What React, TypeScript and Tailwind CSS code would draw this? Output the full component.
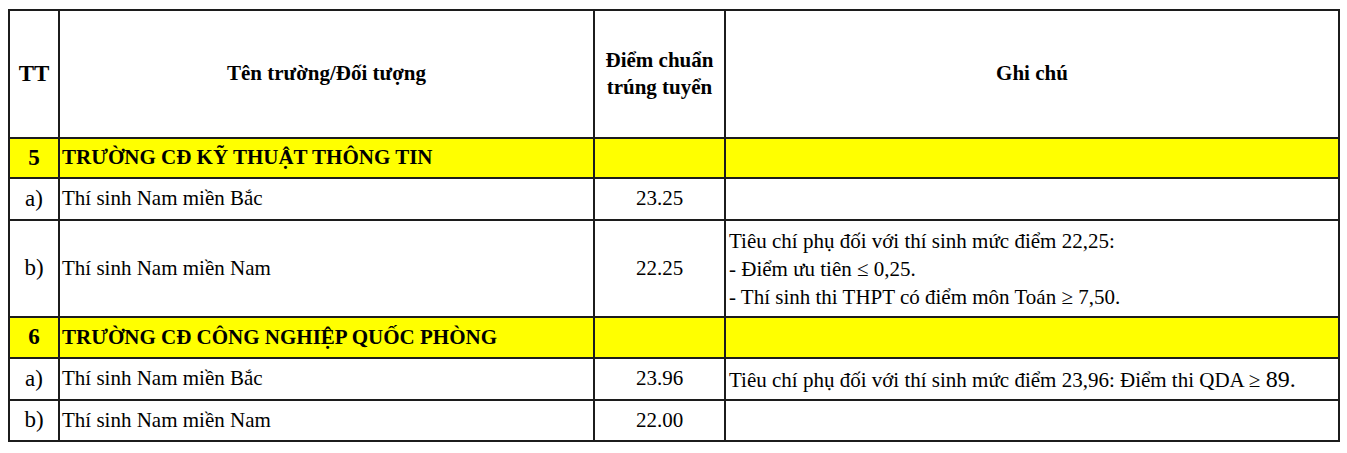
export default function App() {
  const cell = 'border-2 border-[#1c1c1c] align-middle';
  return (
    <div className="w-[1347px] h-[453px] bg-white pt-[9px] pl-[8px] [font-family:'Liberation_Serif','Times_New_Roman',serif] text-black">
      <table className="table-fixed border-collapse w-[1330px]">
        <colgroup>
          <col className="w-[50px]" />
          <col className="w-[535px]" />
          <col className="w-[131px]" />
          <col className="w-[614px]" />
        </colgroup>
        <tbody>
          <tr className="h-[128px]">
            <td className={`${cell} text-center text-[23px] font-bold`}>TT</td>
            <td className={`${cell} text-center text-[21px] font-bold`}>Tên trường/Đối tượng</td>
            <td className={`${cell} text-center text-[21px] font-bold leading-[27px]`}>
              Điểm chuẩn
              <br />
              trúng tuyển
            </td>
            <td className={`${cell} text-center text-[21px] font-bold`}>Ghi chú</td>
          </tr>
          <tr className="h-[40px] bg-[#ffff00]">
            <td className={`${cell} text-center text-[23px] font-bold`}>5</td>
            <td className={`${cell} pl-[2px] text-[21px] font-bold`}>TRƯỜNG CĐ KỸ THUẬT THÔNG TIN</td>
            <td className={cell}></td>
            <td className={cell}></td>
          </tr>
          <tr className="h-[42px]">
            <td className={`${cell} text-center text-[23px]`}>a)</td>
            <td className={`${cell} pl-[2px] text-[21px]`}>Thí sinh Nam miền Bắc</td>
            <td className={`${cell} text-center text-[21px]`}>23.25</td>
            <td className={cell}></td>
          </tr>
          <tr className="h-[97px]">
            <td className={`${cell} text-center text-[23px]`}>b)</td>
            <td className={`${cell} pl-[2px] text-[21px]`}>Thí sinh Nam miền Nam</td>
            <td className={`${cell} text-center text-[21px]`}>22.25</td>
            <td className={`${cell} pl-[3px] text-[21px] leading-[28px]`}>
              Tiêu chí phụ đối với thí sinh mức điểm 22,25:
              <br />- Điểm ưu tiên ≤ 0,25.
              <br />- Thí sinh thi THPT có điểm môn Toán ≥ 7,50.
            </td>
          </tr>
          <tr className="h-[41px] bg-[#ffff00]">
            <td className={`${cell} text-center text-[23px] font-bold`}>6</td>
            <td className={`${cell} pl-[2px] text-[21px] font-bold`}>TRƯỜNG CĐ CÔNG NGHIỆP QUỐC PHÒNG</td>
            <td className={cell}></td>
            <td className={cell}></td>
          </tr>
          <tr className="h-[42px]">
            <td className={`${cell} text-center text-[23px]`}>a)</td>
            <td className={`${cell} pl-[2px] text-[21px]`}>Thí sinh Nam miền Bắc</td>
            <td className={`${cell} text-center text-[21px]`}>23.96</td>
            <td className={`${cell} pl-[3px] text-[21px]`}>
              Tiêu chí phụ đối với thí sinh mức điểm 23,96: Điểm thi QDA ≥ <span className="text-[24px]">89.</span>
            </td>
          </tr>
          <tr className="h-[41px]">
            <td className={`${cell} text-center text-[23px]`}>b)</td>
            <td className={`${cell} pl-[2px] text-[21px]`}>Thí sinh Nam miền Nam</td>
            <td className={`${cell} text-center text-[21px]`}>22.00</td>
            <td className={cell}></td>
          </tr>
        </tbody>
      </table>
    </div>
  );
}
